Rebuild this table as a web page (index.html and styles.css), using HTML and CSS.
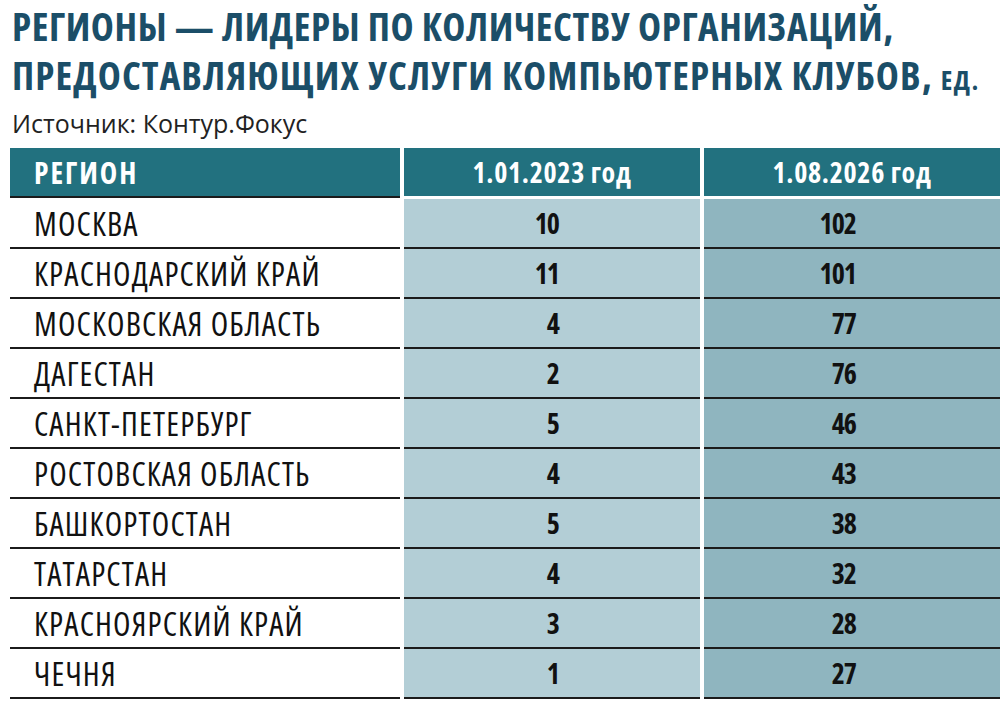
FILE: index.html
```html
<!DOCTYPE html>
<html lang="ru">
<head>
<meta charset="utf-8">
<link rel="stylesheet" href="styles.css">
</head>
<body>
<div class="page">
  <h1 class="title">РЕГИОНЫ — ЛИДЕРЫ ПО КОЛИЧЕСТВУ ОРГАНИЗАЦИЙ,<br><span class="line2">ПРЕДОСТАВЛЯЮЩИХ УСЛУГИ КОМПЬЮТЕРНЫХ КЛУБОВ, <span class="unit">ЕД.</span></span></h1>
  <div class="source">Источник: Контур.Фокус</div>
  <div class="table">
    <div class="th th-region">РЕГИОН</div>
    <div class="th th-num">1.01.2023 год</div>
    <div class="th th-num">1.08.2026 год</div>

    <div class="td region">МОСКВА</div><div class="td c1">10</div><div class="td c2">102</div>
    <div class="td region">КРАСНОДАРСКИЙ КРАЙ</div><div class="td c1">11</div><div class="td c2">101</div>
    <div class="td region">МОСКОВСКАЯ ОБЛАСТЬ</div><div class="td c1">4</div><div class="td c2">77</div>
    <div class="td region">ДАГЕСТАН</div><div class="td c1">2</div><div class="td c2">76</div>
    <div class="td region">САНКТ-ПЕТЕРБУРГ</div><div class="td c1">5</div><div class="td c2">46</div>
    <div class="td region">РОСТОВСКАЯ ОБЛАСТЬ</div><div class="td c1">4</div><div class="td c2">43</div>
    <div class="td region">БАШКОРТОСТАН</div><div class="td c1">5</div><div class="td c2">38</div>
    <div class="td region">ТАТАРСТАН</div><div class="td c1">4</div><div class="td c2">32</div>
    <div class="td region">КРАСНОЯРСКИЙ КРАЙ</div><div class="td c1">3</div><div class="td c2">28</div>
    <div class="td region">ЧЕЧНЯ</div><div class="td c1">1</div><div class="td c2">27</div>
  </div>
</div>
</body>
</html>
```
FILE: styles.css
```css
html, body {
  margin: 0;
  padding: 0;
  background: #ffffff;
}
.page {
  width: 1000px;
  height: 723px;
  overflow: hidden;
}
.title {
  box-sizing: border-box;
  height: 99px;
  margin: 0;
  padding: 1px 0 0 12px;
  font-family: "Open Sans", "Noto Sans", sans-serif;
  font-stretch: 75%;
  font-weight: 700;
  font-size: 39px;
  line-height: 49px;
  letter-spacing: 0.6px;
  color: #1b4e68;
  white-space: nowrap;
}
.line2 {
  letter-spacing: 1.1px;
}
.unit {
  font-size: 27px;
  line-height: 0;
  letter-spacing: 1.5px;
}
.source {
  box-sizing: border-box;
  height: 49px;
  padding: 9px 0 0 12px;
  font-family: "Open Sans", sans-serif;
  font-size: 25px;
  line-height: 30px;
  color: #222222;
}
.table {
  padding-left: 10px;
  display: grid;
  grid-template-columns: 390px 296px 1fr;
  column-gap: 4px;
}
.th {
  height: 48px;
  background: #22717f;
  color: #ffffff;
  font-family: "Open Sans", "Noto Sans", sans-serif;
  font-stretch: 75%;
  font-weight: 700;
  font-size: 28px;
  letter-spacing: 0.7px;
  display: flex;
  align-items: center;
  margin-bottom: 3px;
}
.th-region {
  padding-left: 24px;
  font-size: 29.5px;
  letter-spacing: 2px;
  border-bottom: 2px solid #1b1b1b;
  margin-bottom: 1px;
}
.th-num {
  justify-content: center;
}
.td {
  height: 48px;
  border-bottom: 2px solid #1b1b1b;
  display: flex;
  align-items: center;
  font-family: "Open Sans", "Noto Sans", sans-serif;
  font-stretch: 75%;
  font-size: 32px;
  letter-spacing: 1.2px;
  color: #111111;
}
.region {
  padding-left: 24px;
  background: #ffffff;
}
.c1, .c2 {
  justify-content: flex-end;
  font-weight: 700;
  font-size: 28px;
  letter-spacing: -1px;
}
.c1 {
  background: #b3ced6;
  padding-right: 141px;
}
.c2 {
  background: #8fb5bf;
  padding-right: 144px;
}
```
